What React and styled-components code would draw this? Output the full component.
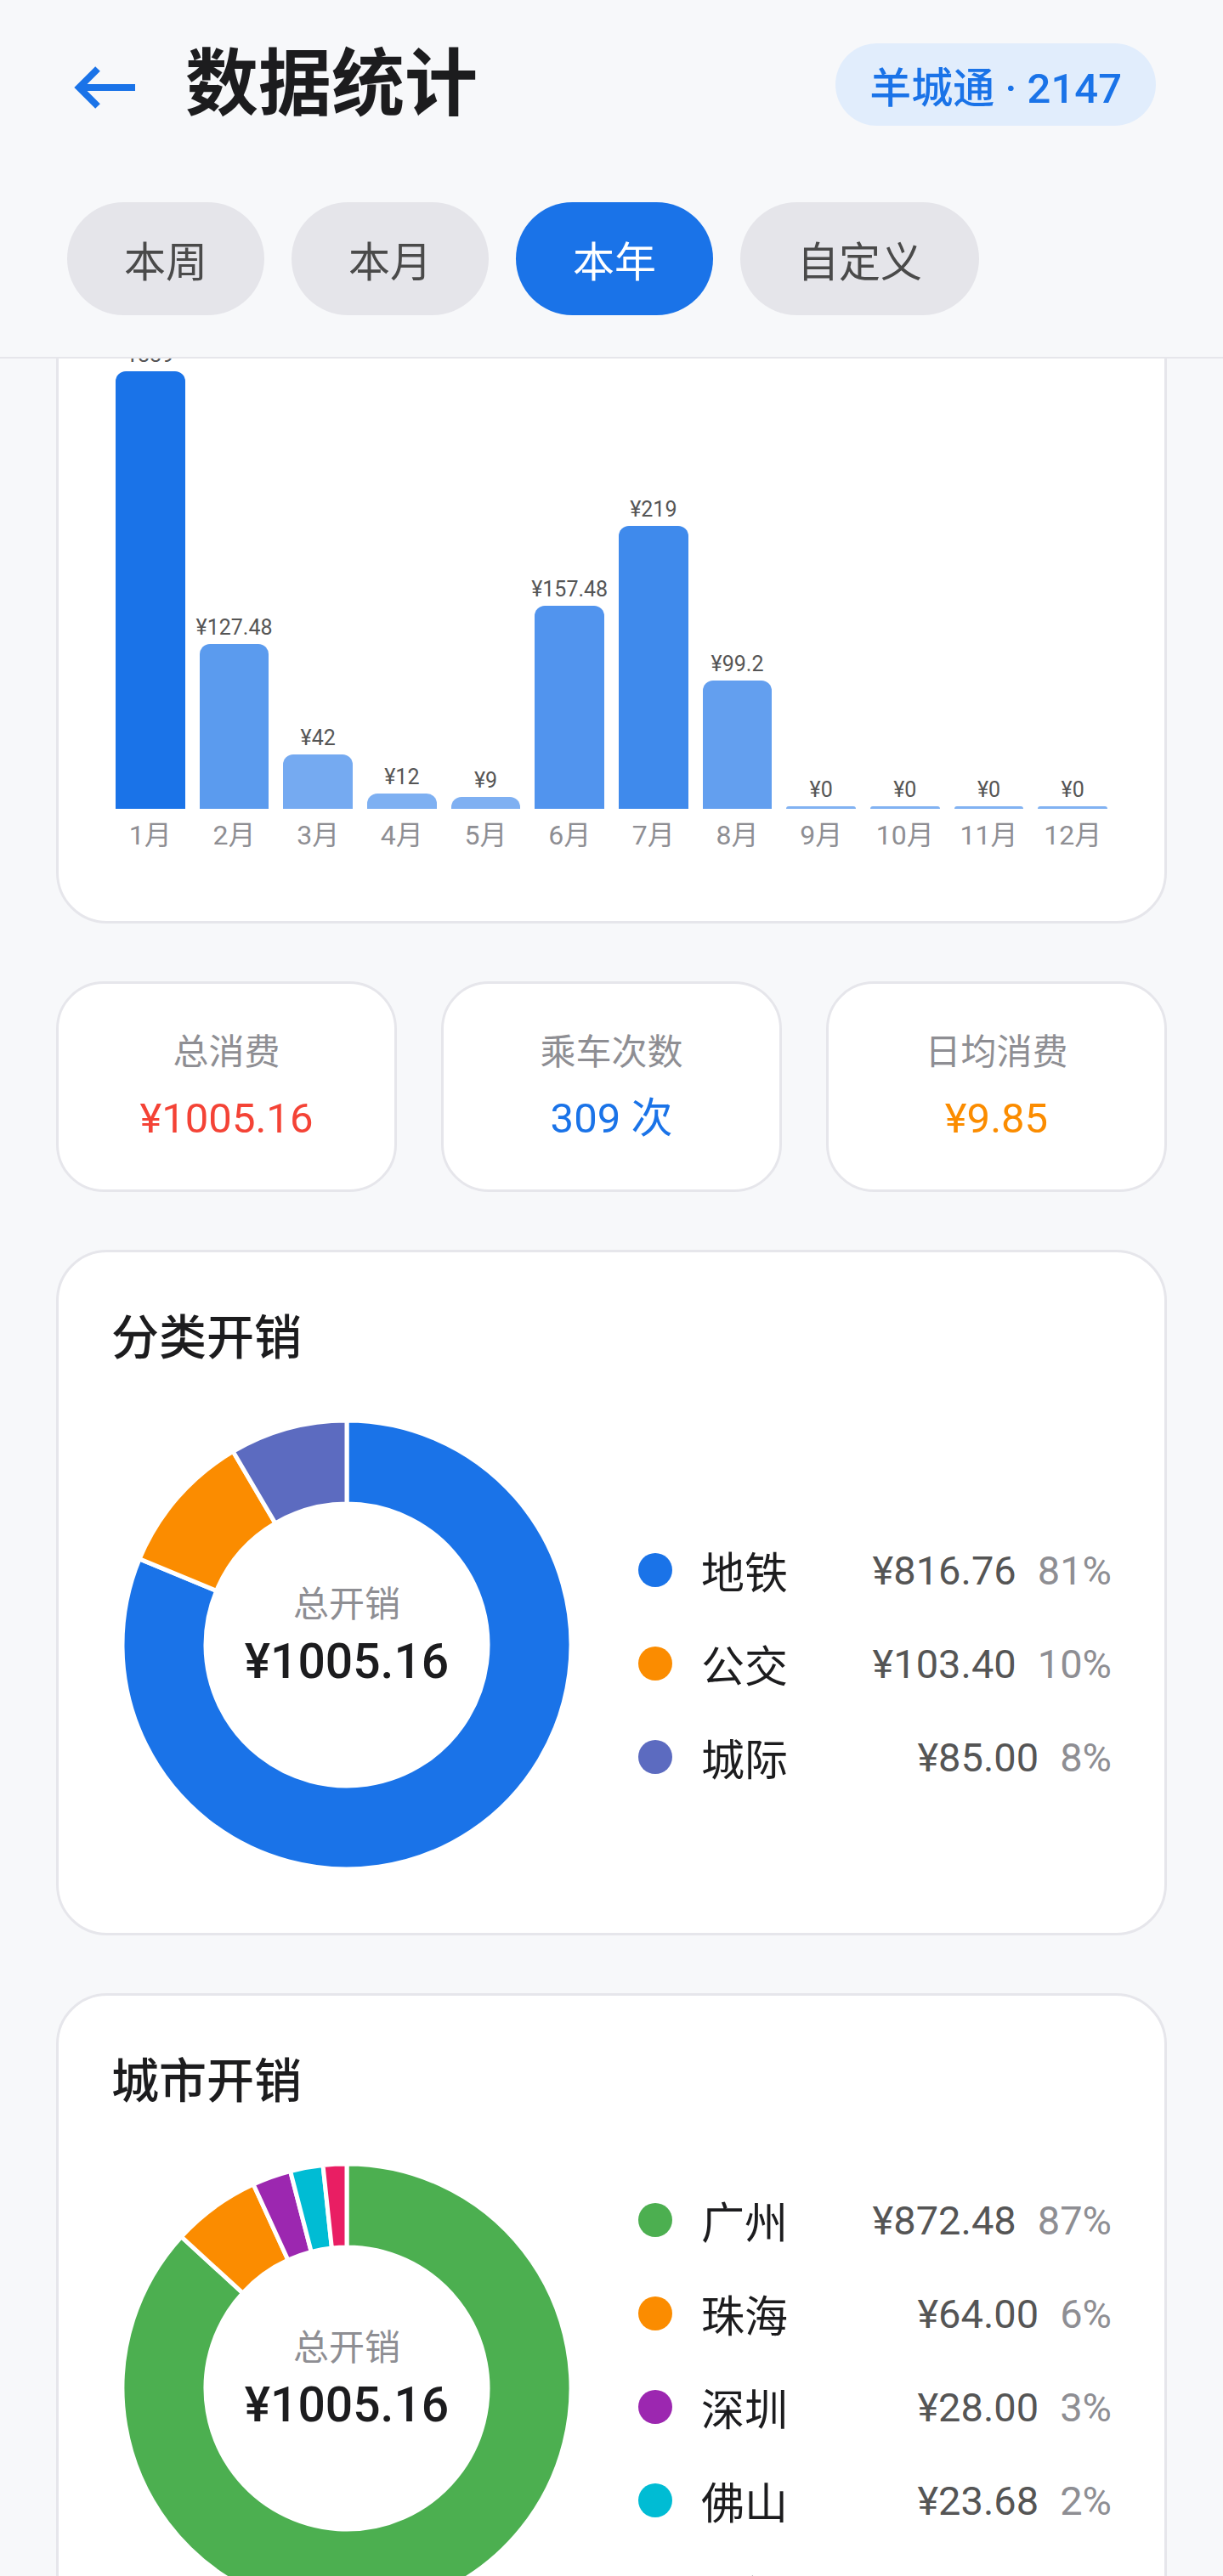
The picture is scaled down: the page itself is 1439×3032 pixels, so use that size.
import React from "react";
import styled, { createGlobalStyle } from "styled-components";

const GlobalStyle = createGlobalStyle`
  html, body {
    margin: 0;
    padding: 0;
    background: #f7f8fa;
    font-family: Roboto, "Noto Sans CJK SC", sans-serif;
  }
  * { box-sizing: border-box; }
`;

const BLUE = "#1a73e8";

const months = [
  { label: "1月", value: 339 },
  { label: "2月", value: 127.48 },
  { label: "3月", value: 42 },
  { label: "4月", value: 12 },
  { label: "5月", value: 9 },
  { label: "6月", value: 157.48 },
  { label: "7月", value: 219 },
  { label: "8月", value: 99.2 },
  { label: "9月", value: 0 },
  { label: "10月", value: 0 },
  { label: "11月", value: 0 },
  { label: "12月", value: 0 },
];

const categories = [
  { name: "地铁", value: 816.76, color: "#1a73e8" },
  { name: "公交", value: 103.4, color: "#fb8c00" },
  { name: "城际", value: 85.0, color: "#5c6bc0" },
];

const cities = [
  { name: "广州", value: 872.48, color: "#4caf50" },
  { name: "珠海", value: 64.0, color: "#fb8c00" },
  { name: "深圳", value: 28.0, color: "#9c27b0" },
  { name: "佛山", value: 23.68, color: "#00bcd4" },
  { name: "江门", value: 17.0, color: "#e91e63" },
];

const TOTAL = 1005.16;
const tabs = ["本周", "本月", "本年", "自定义"];

const Page = styled.div`
  height: 100vh;
  display: flex;
  flex-direction: column;
  overflow: hidden;
  background: #f7f8fa;
`;

const Header = styled.header`
  flex-shrink: 0;
  padding: 51px 79px 49px;
  background: #f7f8fa;
  border-bottom: 2px solid #e6e6eb;
`;

const TitleRow = styled.div`
  height: 97px;
  display: flex;
  align-items: center;
  justify-content: space-between;
`;

const TitleLeft = styled.div`
  display: flex;
  align-items: center;
`;

const BackIcon = styled.svg`
  width: 80px;
  height: 56px;
  margin-left: 5px;
  margin-top: 6px;
`;

const Title = styled.h1`
  margin: 0 0 0 54px;
  font-size: 86px;
  line-height: 97px;
  font-weight: 600;
  color: #1c1c1e;
`;

const Badge = styled.div`
  height: 97px;
  padding: 0 40px;
  border-radius: 49px;
  background: #e1edfc;
  color: ${BLUE};
  font-size: 49px;
  font-weight: 500;
  display: flex;
  align-items: center;
`;

const Tabs = styled.div`
  display: flex;
  gap: 32px;
  margin-top: 90px;
`;

const Tab = styled.div`
  height: 133px;
  padding: 0 67px;
  border-radius: 67px;
  display: flex;
  align-items: center;
  font-size: 49px;
  background: ${(p) => (p.$active ? BLUE : "#e5e5ea")};
  color: ${(p) => (p.$active ? "#fff" : "#4a4a4a")};
`;

const Scroll = styled.main`
  flex: 1;
  overflow: hidden;
`;

/* scrolled content: offset equals the current scroll position */
const ScrollInner = styled.div`
  margin-top: -163px;
  padding: 68px 66px;
  display: flex;
  flex-direction: column;
  gap: 68px;
`;

const Card = styled.section`
  background: #fff;
  border: 3px solid #e6e6eb;
  border-radius: 60px;
  padding: 62px 62px ${(p) => p.$pb || 62}px;
`;

const CardTitle = styled.h2`
  margin: 0;
  font-size: 56px;
  line-height: 78px;
  font-weight: 500;
  color: #1c1c1e;
`;

const BarGrid = styled.div`
  display: grid;
  grid-template-columns: repeat(12, minmax(0, 1fr));
  column-gap: 17px;
  padding: 0 5px;
`;

const BarColumn = styled.div`
  display: flex;
  flex-direction: column;
  align-items: stretch;
  min-width: 0;
`;

const BarSlot = styled.div`
  height: 560px;
  display: flex;
  flex-direction: column;
  justify-content: flex-end;
  align-items: stretch;
`;

const BarValue = styled.div`
  display: flex;
  justify-content: center;
  font-size: 25px;
  line-height: 30px;
  margin-bottom: 4px;
  color: #555;
  white-space: nowrap;
`;

const Bar = styled.div`
  border-radius: 12px 12px 0 0;
`;

const MonthLabel = styled.div`
  display: flex;
  justify-content: center;
  margin-top: 12px;
  font-size: 32px;
  line-height: 38px;
  color: #8e8e93;
  white-space: nowrap;
`;

const StatRow = styled.div`
  display: grid;
  grid-template-columns: repeat(3, 1fr);
  gap: 52px;
`;

const StatCard = styled.div`
  height: 248px;
  background: #fff;
  border: 3px solid #e6e6eb;
  border-radius: 56px;
  display: flex;
  flex-direction: column;
  align-items: center;
  justify-content: center;
  gap: 20px;
`;

const StatLabel = styled.div`
  font-size: 42px;
  line-height: 56px;
  color: #8e8e93;
`;

const StatValue = styled.div`
  font-size: 49px;
  line-height: 60px;
  font-weight: 400;
  color: ${(p) => p.$color};
`;

const ChartRow = styled.div`
  display: flex;
  align-items: center;
  margin-top: 45px;
`;

const DonutBox = styled.div`
  position: relative;
  width: 528px;
  height: 528px;
  margin: 13px;
  flex-shrink: 0;
`;

const DonutCenter = styled.div`
  position: absolute;
  inset: 0;
  padding-bottom: 20px;
  display: flex;
  flex-direction: column;
  align-items: center;
  justify-content: center;
  gap: 10px;
`;

const CenterLabel = styled.div`
  font-size: 42px;
  line-height: 50px;
  color: #8e8e93;
`;

const CenterValue = styled.div`
  font-size: 57px;
  line-height: 64px;
  font-weight: 500;
  color: #1c1c1e;
`;

const Legend = styled.div`
  flex: 1;
  margin-left: 66px;
  padding-top: 44px;
  display: flex;
  flex-direction: column;
  gap: 44px;
`;

const LegendRow = styled.div`
  height: 66px;
  display: flex;
  align-items: center;
`;

const Dot = styled.span`
  width: 40px;
  height: 40px;
  border-radius: 50%;
  background: ${(p) => p.$color};
  margin-right: 34px;
  flex-shrink: 0;
`;

const LegendName = styled.span`
  flex: 1;
  font-size: 51px;
  color: #1c1c1e;
`;

const LegendAmount = styled.span`
  font-size: 47px;
  color: #555;
`;

const LegendPct = styled.span`
  margin-left: 25px;
  font-size: 47px;
  color: #8e8e93;
`;

function polar(c, r, deg) {
  const a = (deg * Math.PI) / 180;
  return [c + r * Math.sin(a), c - r * Math.cos(a)];
}

function arcPath(c, R, r, a0, a1) {
  const large = a1 - a0 > 180 ? 1 : 0;
  const [x0, y0] = polar(c, R, a0);
  const [x1, y1] = polar(c, R, a1);
  const [x2, y2] = polar(c, r, a1);
  const [x3, y3] = polar(c, r, a0);
  return `M${x0} ${y0} A${R} ${R} 0 ${large} 1 ${x1} ${y1} L${x2} ${y2} A${r} ${r} 0 ${large} 0 ${x3} ${y3} Z`;
}

function Donut({ data }) {
  let start = 0;
  const total = data.reduce((s, d) => s + d.value, 0);
  return (
    <DonutBox>
      <svg width="528" height="528" viewBox="0 0 528 528">
        {data.map((d) => {
          const end = start + (d.value / total) * 360;
          const path = arcPath(264, 264, 166, start, end);
          start = end;
          return <path key={d.name} d={path} fill={d.color} stroke="#fff" strokeWidth="5" strokeLinejoin="miter" />;
        })}
      </svg>
      <DonutCenter>
        <CenterLabel>总开销</CenterLabel>
        <CenterValue>¥{TOTAL.toFixed(2)}</CenterValue>
      </DonutCenter>
    </DonutBox>
  );
}

function PieCard({ title, data }) {
  return (
    <Card>
      <CardTitle>{title}</CardTitle>
      <ChartRow>
        <Donut data={data} />
        <Legend>
          {data.map((d) => (
            <LegendRow key={d.name}>
              <Dot $color={d.color} />
              <LegendName>{d.name}</LegendName>
              <LegendAmount>¥{d.value.toFixed(2)}</LegendAmount>
              <LegendPct>{Math.round((d.value / TOTAL) * 100)}%</LegendPct>
            </LegendRow>
          ))}
        </Legend>
      </ChartRow>
    </Card>
  );
}

function MonthChart() {
  const max = Math.max(...months.map((m) => m.value));
  return (
    <Card $pb={82}>
      <BarGrid>
        {months.map((m) => {
          const ratio = m.value / max;
          const h = Math.max(3, ratio * 515);
          const alpha = 0.55 + 0.45 * ratio;
          return (
            <BarColumn key={m.label}>
              <BarSlot>
                <BarValue>¥{m.value}</BarValue>
                <Bar style={{ height: h, background: `rgba(26,115,232,${alpha})` }} />
              </BarSlot>
              <MonthLabel>{m.label}</MonthLabel>
            </BarColumn>
          );
        })}
      </BarGrid>
    </Card>
  );
}

export default function App() {
  return (
    <Page>
      <GlobalStyle />
      <Header>
        <TitleRow>
          <TitleLeft>
            <BackIcon viewBox="0 0 80 56">
              <path d="M75 28H9M31 6L9 28L31 50" fill="none" stroke={BLUE} strokeWidth="8" />
            </BackIcon>
            <Title>数据统计</Title>
          </TitleLeft>
          <Badge>羊城通 · 2147</Badge>
        </TitleRow>
        <Tabs>
          {tabs.map((t) => (
            <Tab key={t} $active={t === "本年"}>{t}</Tab>
          ))}
        </Tabs>
      </Header>
      <Scroll>
        <ScrollInner>
          <MonthChart />
          <StatRow>
            <StatCard>
              <StatLabel>总消费</StatLabel>
              <StatValue $color="#f44336">¥1005.16</StatValue>
            </StatCard>
            <StatCard>
              <StatLabel>乘车次数</StatLabel>
              <StatValue $color={BLUE}>309 次</StatValue>
            </StatCard>
            <StatCard>
              <StatLabel>日均消费</StatLabel>
              <StatValue $color="#fb8c00">¥9.85</StatValue>
            </StatCard>
          </StatRow>
          <PieCard title="分类开销" data={categories} />
          <PieCard title="城市开销" data={cities} />
        </ScrollInner>
      </Scroll>
    </Page>
  );
}
